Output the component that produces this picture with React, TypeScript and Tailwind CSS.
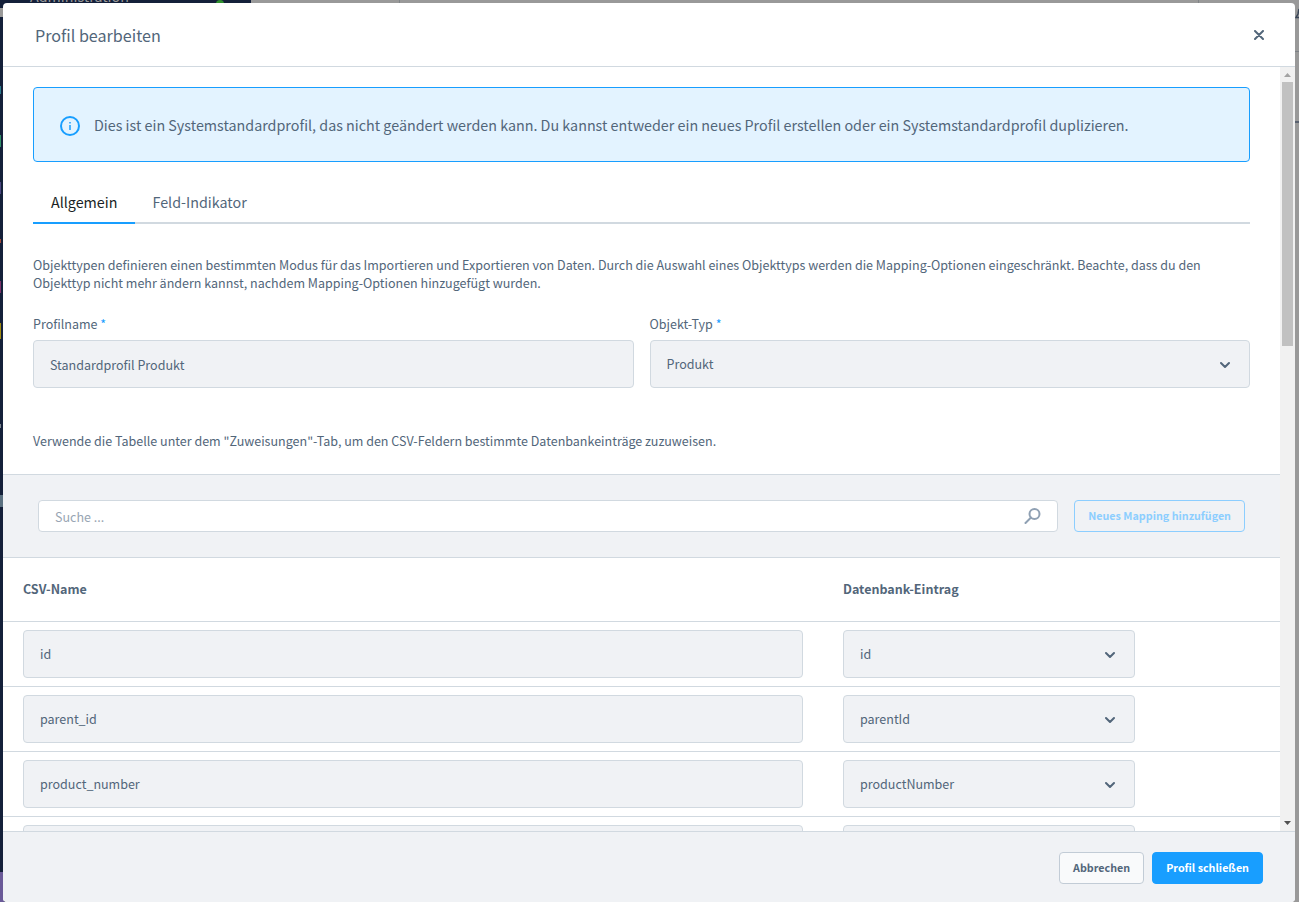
import React from 'react'

interface Mapping {
	csvName: string,
	entry: string,
}

interface SelectBoxProps {
	id?: string,
	label?: string,
	value: string,
}

const mappings: Mapping[] = [
	{ csvName: 'id', entry: 'id' },
	{ csvName: 'parent_id', entry: 'parentId' },
	{ csvName: 'product_number', entry: 'productNumber' },
	{ csvName: 'active', entry: 'active' },
]

// visible slivers of the sidebar icons
const sidebarMarks = [
	'top-2 w-[3px] h-[9px] bg-[#999999]',
	'top-[86px] w-px h-2 bg-[#2a7a8c]',
	'top-[135px] w-px h-3 bg-[#2f8f68]',
	'top-[182px] w-px h-3 bg-[#4a4580]',
	'top-[239px] w-px h-1 bg-[#a04a3a]',
	'top-[281px] w-px h-3 bg-[#7a3068]',
	'top-[323px] w-px h-4 bg-[#a08a10]',
	'top-[424px] w-px h-1 bg-[#7a8490]',
	'top-[495px] w-[3px] h-3 bg-[#5a7080]',
]

const fieldClass = 'block w-full h-12 rounded border border-[#d1d9e0] bg-[#f0f2f5] px-4 text-[#52667a] opacity-100'
const buttonClass = 'h-8 rounded border px-[13px] text-xs font-bold'

function Backdrop() {
	return (
		<div className="absolute inset-0 overflow-hidden bg-[#999999]" aria-hidden="true">
			<div className="absolute inset-y-0 left-0 w-[251px] bg-[#14203a]">
				<span className="absolute left-[30px] -top-3 text-base leading-4 text-[#999999]">Administration</span>
				<span className="absolute left-[216px] top-0 w-2 h-1 rounded-t-full bg-[#2f8f2f]"/>
				{sidebarMarks.map((mark) => (
					<span key={mark} className={`absolute left-0 ${mark}`}/>
				))}
				<span className="absolute left-0 bottom-0 w-1 h-[30px] bg-[#6a5a98]"/>
			</div>
			<div className="absolute top-0 left-[399px] w-px h-1 bg-[#808488]"/>
			<div className="absolute top-0 left-[1198px] w-px h-1 bg-[#808488]"/>
			<svg className="absolute top-2 right-0" width="4" height="12" viewBox="0 0 4 12" fill="none" stroke="#3a4658" strokeWidth="1.500">
				<path d="M4 1L3 6L1 9.500H4"/>
			</svg>
			<div className="absolute top-[51px] right-0 w-1 h-px bg-[#7d8186]"/>
			<div className="absolute top-[121px] right-0 w-1 h-0.5 bg-[#5a6270]"/>
		</div>
	)
}

function SelectBox({id, label, value}: SelectBoxProps) {
	return (
		<div className="relative">
			<select id={id} aria-label={label} disabled className={`${fieldClass} appearance-none`}>
				<option>{value}</option>
			</select>
			<svg className="absolute right-5 top-5 pointer-events-none" width="10" height="10" viewBox="0 0 10 10" fill="none" stroke="#52667a" strokeWidth="2" strokeLinecap="round" strokeLinejoin="round">
				<path d="M1 3l4 4 4-4"/>
			</svg>
		</div>
	)
}

function ScrollBar() {
	return (
		<div className="flex flex-col items-center w-[15px] shrink-0 bg-[#f1f1f1]" aria-hidden="true">
			<svg width="15" height="15" viewBox="0 0 15 15" fill="#a3a3a3"><path d="M4 10h7L7.500 6z"/></svg>
			<div className="flex-1 w-[11px]">
				<div className="h-[36%] bg-[#c1c1c1]"/>
			</div>
			<svg width="15" height="15" viewBox="0 0 15 15" fill="#505050"><path d="M4 5h7L7.500 9z"/></svg>
		</div>
	)
}

export default function App() {
	return (
		<div className="relative h-screen pt-[3px] pl-[3px] pr-1 overflow-hidden text-sm leading-[18px] text-[#52667a] font-['Source_Sans_Pro','Noto_Sans_CJK_SC',sans-serif] [font-size-adjust:0.486]">
			<Backdrop/>
			<div role="dialog" aria-labelledby="title" className="relative flex flex-col h-full rounded bg-white overflow-hidden">
				<header className="flex items-center justify-between h-16 shrink-0 border-b border-[#d1d9e0] pl-8 pr-[31px]">
					<h1 id="title" className="text-lg leading-6">Profil bearbeiten</h1>
					<button type="button" aria-label="Schließen">
						<svg width="10" height="10" viewBox="0 0 10 10" fill="none" stroke="#52667a" strokeWidth="2" strokeLinecap="round">
							<path d="M1 1l8 8M9 1l-8 8"/>
						</svg>
					</button>
				</header>

				<div className="flex flex-1 min-h-0">
					<main className="flex-1 min-w-0 overflow-hidden">
						<section className="px-[30px] pt-5">
							<div className="flex items-center gap-[14px] h-[75px] rounded border border-[#189eff] bg-[#e3f3ff] pl-[26px] pr-6">
								<svg className="shrink-0" width="20" height="22" viewBox="0 -2 20 22" fill="none" stroke="#189eff">
									<circle cx="10" cy="10" r="9" strokeWidth="2"/>
									<path d="M10 9v5M10 6v1.500" strokeWidth="1.500"/>
								</svg>
								<p className="text-base leading-6">Dies ist ein Systemstandardprofil, das nicht geändert werden kann. Du kannst entweder ein neues Profil erstellen oder ein Systemstandardprofil duplizieren.</p>
							</div>

							<nav className="flex mt-5 h-[42px] text-base leading-6 shadow-[inset_0_-2px_0_#d1d9e0]">
								<a href="#allgemein" className="px-[18px] pt-2 border-b-2 border-[#189eff] text-[#1a1f26]">Allgemein</a>
								<a href="#feld-indikator" className="px-[17px] pt-2">Feld-Indikator</a>
							</nav>

							<p className="mt-8">Objekttypen definieren einen bestimmten Modus für das Importieren und Exportieren von Daten. Durch die Auswahl eines Objekttyps werden die Mapping-Optionen eingeschränkt. Beachte, dass du den Objekttyp nicht mehr ändern kannst, nachdem Mapping-Optionen hinzugefügt wurden.</p>

							<div className="grid grid-cols-2 gap-4 mt-[23px]">
								<div>
									<label htmlFor="name" className="block mb-[7px]">Profilname <span className="text-[#189eff]">*</span></label>
									<input id="name" type="text" disabled value="Standardprofil Produkt" className={fieldClass}/>
								</div>
								<div>
									<label htmlFor="type" className="block mb-[7px]">Objekt-Typ <span className="text-[#189eff]">*</span></label>
									<SelectBox id="type" value="Produkt"/>
								</div>
							</div>

							<p className="mt-11 pb-6">Verwende die Tabelle unter dem "Zuweisungen"-Tab, um den CSV-Feldern bestimmte Datenbankeinträge zuzuweisen.</p>
						</section>

						<div className="flex items-center gap-4 h-[84px] border-y border-[#d1d9e0] bg-[#f0f2f5] px-[35px]">
							<div className="relative flex-1">
								<input type="search" aria-label="Suche" placeholder="Suche ..." className="block w-full h-8 rounded-sm border border-[#d1d9e0] bg-white px-4 placeholder:text-[#98a5b3]"/>
								<svg className="absolute right-[17px] top-2" width="17" height="16" viewBox="0 0 17 16" fill="none" stroke="#8fa0b3" strokeWidth="2" strokeLinecap="round">
									<circle cx="10.500" cy="6" r="5"/>
									<path d="M7 9.500L1.500 15"/>
								</svg>
							</div>
							<button type="button" disabled className={`${buttonClass} border-[#8cceff] text-[#8cceff]`}>Neues Mapping hinzufügen</button>
						</div>

						<table className="w-full table-fixed border-collapse">
							<thead>
								<tr className="h-[63px] border-b border-[#d1d9e0] text-left">
									<th className="w-[820px] px-5 font-bold">CSV-Name</th>
									<th className="w-[332px] px-5 font-bold">Datenbank-Eintrag</th>
									<th/>
								</tr>
							</thead>
							<tbody>
								{mappings.map((mapping) => (
									<tr key={mapping.csvName} className="h-[65px] border-b border-[#d1d9e0]">
										<td className="px-5">
											<input type="text" aria-label="CSV-Name" disabled value={mapping.csvName} className={fieldClass}/>
										</td>
										<td className="px-5">
											<SelectBox label="Datenbank-Eintrag" value={mapping.entry}/>
										</td>
										<td/>
									</tr>
								))}
							</tbody>
						</table>
					</main>
					<ScrollBar/>
				</div>

				<footer className="flex items-center justify-end gap-2 h-[71px] shrink-0 border-t border-[#d1d9e0] bg-[#f0f2f5] pt-0.5 pr-8">
					<button type="button" className={`${buttonClass} border-[#c2ccd6] bg-[#f9fafb]`}>Abbrechen</button>
					<button type="button" className={`${buttonClass} border-[#189eff] bg-[#189eff] text-white`}>Profil schließen</button>
				</footer>
			</div>
		</div>
	)
}
